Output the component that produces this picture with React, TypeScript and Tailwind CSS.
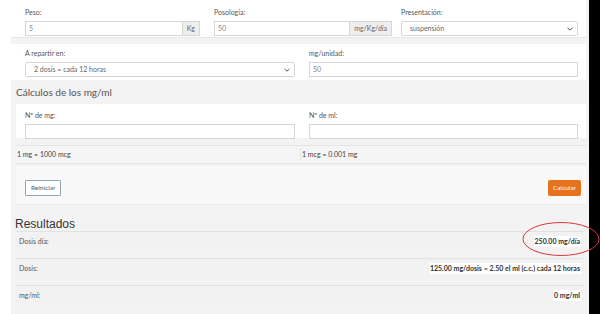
import React from 'react';

const Label: React.FC<{ children: React.ReactNode }> = ({ children }) => (
  <div className="mb-[4px] h-[9px] text-[7px] leading-[9px] text-[#555]">{children}</div>
);

const Field: React.FC<{ value?: string; addon?: string; className?: string }> = ({ value, addon, className }) => (
  <div className={`flex h-[15px] border border-[#d6d6d6] bg-white ${className ?? ''}`}>
    <div className="flex flex-1 items-center pl-[3px] text-[7px] text-[#888]">{value}</div>
    {addon && (
      <div className="flex items-center border-l border-[#d6d6d6] bg-[#eeeeee] px-[4px] text-[7px] text-[#666]">{addon}</div>
    )}
  </div>
);

const Select: React.FC<{ value: string; className?: string; pad?: string }> = ({ value, className, pad }) => (
  <div className={`flex h-[15px] items-center justify-between rounded-[2px] border border-[#d6d6d6] bg-white pr-[4px] ${pad ?? 'pl-[8px]'} ${className ?? ''}`}>
    <span className="text-[7px] text-[#666]">{value}</span>
    <svg width="6" height="4" viewBox="0 0 6 4" fill="none" stroke="#555" strokeWidth="1">
      <path d="M0.5 0.8 L3 3.2 L5.5 0.8" />
    </svg>
  </div>
);

const ResultRow: React.FC<{ label: string; value: string }> = ({ label, value }) => (
  <div className="mx-[5px] flex h-[20px] items-center justify-between border-t border-[#e2e2e2] bg-[#f2f2f2] px-[3px]">
    <span className="text-[7px] text-[#555]">{label}</span>
    <span className="bg-white px-[1px] text-[7px] font-bold text-[#333]">{value}</span>
  </div>
);

export default function App() {
  return (
    <div className="relative flex h-[314px] w-[600px] overflow-hidden bg-white font-['Lato',sans-serif]">
      <div className="ml-[11px] flex w-[578px] flex-col bg-[#f3f3f3]">
        {/* Peso / Posología / Presentación */}
        <div className="mr-[3px] flex h-[38px] gap-[14px] border-b border-[#e6e6e6] bg-white pl-[14px] pt-[8px]">
          <div className="w-[175px]">
            <Label>Peso:</Label>
            <Field value="5" addon="Kg" />
          </div>
          <div className="w-[178px]">
            <Label>Posología:</Label>
            <Field value="50" addon="mg/Kg/día" />
          </div>
          <div className="-ml-[5px] w-[177px]">
            <Label>Presentación:</Label>
            <Select value="suspensión" />
          </div>
        </div>

        {/* A repartir en / mg/unidad */}
        <div className="mr-[3px] mt-[6px] flex h-[36px] gap-[14px] bg-white pl-[14px] pt-[5px]">
          <div className="w-[270px]">
            <Label>A repartir en:</Label>
            <Select value="2 dosis = cada 12 horas" />
          </div>
          <div className="w-[269px]">
            <Label>mg/unidad:</Label>
            <Field value="50" />
          </div>
        </div>

        <div className="ml-[5px] flex h-[24px] items-center text-[10px] text-[#555]">Cálculos de los mg/ml</div>

        {/* Nº de mg / Nº de ml */}
        <div className="ml-[5px] mr-[3px] flex h-[34px] gap-[14px] bg-white pl-[9px] pt-[7px]">
          <div className="w-[270px]">
            <Label>Nº de mg:</Label>
            <Field />
          </div>
          <div className="w-[269px]">
            <Label>Nº de ml:</Label>
            <Field />
          </div>
        </div>

        <div className="ml-[5px] mr-[3px] mt-[7px] flex h-[19px] items-center border-y border-[#e4e4e4] bg-[#f5f5f5] text-[7px] text-[#444]">
          <div className="w-[284px] pl-[1px]">1 mg = 1000 mcg</div>
          <div className="border-l border-[#e4e4e4] pl-[1px]">1 mcg = 0.001 mg</div>
        </div>

        {/* Buttons */}
        <div className="ml-[5px] mr-[3px] mt-[2px] flex h-[39px] items-center justify-between border-b border-[#e8e8e8] bg-[#f9f9f9] pl-[9px] pr-[5px] pt-[5px]">
          <button className="h-[16px] rounded-[1px] border border-[#8fa6b0] bg-white px-[5px] text-[6.5px] text-[#4a5d6a]">Reiniciar</button>
          <button className="h-[16px] rounded-[2px] bg-[#e6721c] px-[5px] text-[6.5px] text-white">Calcular</button>
        </div>

        <div className="ml-[4px] mt-[11px] h-[16px] font-['Liberation_Sans',sans-serif] text-[12px] leading-[16px] text-[#333]">Resultados</div>

        <div className="-mt-[1px] flex flex-col">
          <ResultRow label="Dosis día:" value="250.00 mg/día" />
          <div className="h-[7px]" />
          <ResultRow label="Dosis:" value="125.00 mg/dosis = 2.50 el ml (c.c.) cada 12 horas" />
          <div className="h-[7px]" />
          <ResultRow label="mg/ml:" value="0 mg/ml" />
        </div>
      </div>
      <div className="w-[11px] bg-black" />

      {/* red annotation ellipse */}
      <svg className="pointer-events-none absolute left-[522px] top-[221px]" width="78" height="36" viewBox="0 0 78 36" fill="none">
        <ellipse cx="39" cy="18" rx="38" ry="16.5" stroke="#d9363e" strokeWidth="1" />
      </svg>
    </div>
  );
}
